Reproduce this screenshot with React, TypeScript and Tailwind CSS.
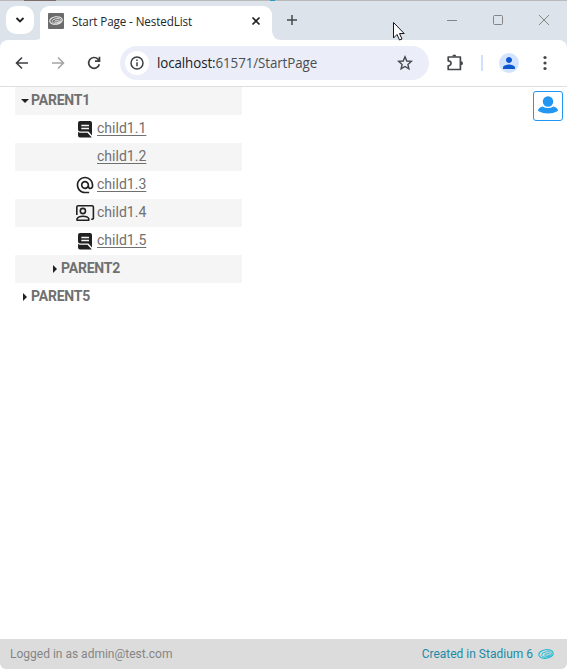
import type { ReactNode } from 'react';
import { MdAlternateEmail, MdPerson } from 'react-icons/md';

function StadiumLogo({ className }: { className: string }) {
  return (
    <svg viewBox="0 0 16 12" className={className} fill="none" stroke="currentColor">
      <g transform="rotate(-8 8 6)">
        <ellipse cx="8" cy="6" rx="7.2" ry="4.3" strokeWidth="1.2" />
        <ellipse cx="8.6" cy="6.5" rx="5" ry="2.6" strokeWidth=".9" />
        <ellipse cx="9.2" cy="7" rx="2.8" ry="1.1" strokeWidth=".9" />
      </g>
    </svg>
  );
}

function NoteIcon() {
  return (
    <svg viewBox="0 0 16 18" className="h-[18px] w-4">
      <path d="M3 1H13Q15 1 15 3V15.5L11.5 11.5H3Q1 11.5 1 9.5V3Q1 1 3 1Z" fill="#212121" />
      <path d="M1 11.5Q1.5 12.7 3 12.7H10.5L14.8 17.4H3Q1 17.4 1 15.2Z" fill="#212121" />
      <path d="M4.3 5.5H12M4.3 8.5H12" stroke="#f5f5f5" strokeWidth="1.3" />
    </svg>
  );
}

function PresenterIcon() {
  return (
    <svg viewBox="0 0 20 18" className="h-[18px] w-5" fill="none" stroke="#212121" strokeWidth="1.6">
      <path d="M1.8 11V3.2Q1.8 1.8 3.2 1.8H17Q18.4 1.8 18.4 3.2V14Q18.4 15.3 16.2 15.3" />
      <circle cx="7.9" cy="7" r="2.6" />
      <path d="M2 16.2V14.8C3 12.8 5.5 12.3 8 12.3S13 12.8 13.8 14.8V16.2Z" strokeLinejoin="round" />
    </svg>
  );
}

function Caret({ open }: { open?: boolean }) {
  return (
    <svg viewBox="0 0 8 8" className="mr-0.5 size-2 shrink-0" fill="#212121">
      {open ? <path d="M0 2H8L4 6Z" /> : <path d="M2 0L6 4L2 8Z" />}
    </svg>
  );
}

function Parent({ label, open, nested, shaded }: { label: string; open?: boolean; nested?: boolean; shaded?: boolean }) {
  return (
    <li className={`flex h-7 items-center ${nested ? 'pl-9' : 'pl-1.5'} ${shaded ? 'bg-[#f5f5f5]' : ''}`}>
      <Caret open={open} />
      <span className="pb-0.5 text-[14px] leading-5 font-bold tracking-[-0.2px]">{label}</span>
    </li>
  );
}

function Child({ label, icon, plain, shaded }: { label: string; icon?: ReactNode; plain?: boolean; shaded?: boolean }) {
  return (
    <li className={`flex h-7 items-center pl-[60px] ${shaded ? 'bg-[#f5f5f5]' : ''}`}>
      <span className="flex w-[22px] shrink-0 justify-center pr-0.5">{icon}</span>
      <span className={`pb-0.5 text-[14px] leading-5 tracking-[0.02px] ${plain ? '' : 'underline underline-offset-2'}`}>{label}</span>
    </li>
  );
}

function TabStrip() {
  return (
    <div className="relative flex h-10 bg-[#dce3eb] pt-[6px] pl-[6px]">
      <div className="absolute inset-x-0 top-0 flex h-px bg-[#b9b9b9]">
        <span className="ml-6 w-8 bg-[#806c66]" />
        <span className="ml-[214px] w-[5px] bg-[#289dbd]" />
      </div>
      <button className="flex h-7 w-7 items-center justify-center rounded-[10px] bg-white">
        <svg viewBox="0 0 10 10" className="size-2.5" fill="none" stroke="#202124" strokeWidth="1.8">
          <path d="M1.5 3L5 6.5L8.5 3" />
        </svg>
      </button>
      <svg viewBox="0 0 10 10" className="-mr-1 size-2.5 self-end" fill="white">
        <path d="M0 10Q10 10 10 0V10Z" />
      </svg>
      <div className="flex h-[34px] w-[232px] items-center rounded-t-[9px] bg-white pr-[11px] pb-[5px] pl-2">
        <span className="flex size-4 items-center justify-center rounded-[1px] bg-[#6b6b6b] text-[#eeeeee]">
          <StadiumLogo className="h-[11px] w-[14px]" />
        </span>
        <span className="ml-2 w-[170px] origin-left scale-x-[0.972] pt-0.5 font-['Open_Sans','Noto_Sans',sans-serif] text-[12px] leading-4 tracking-[-0.12px] whitespace-nowrap text-[#25272a]">Start Page - NestedList</span>
        <svg viewBox="0 0 10 10" className="ml-auto size-2.5" stroke="#202124" strokeWidth="1.7">
          <path d="M1.5 1.5L8.5 8.5M8.5 1.5L1.5 8.5" />
        </svg>
      </div>
      <svg viewBox="0 0 10 10" className="size-2.5 self-end" fill="white">
        <path d="M0 0Q0 10 10 10H0Z" />
      </svg>
      <svg viewBox="0 0 12 12" className="mt-2 ml-1 size-3" stroke="#45484b" strokeWidth="1.5">
        <path d="M6 1V11M1 6H11" />
      </svg>
      <div className="mt-[7px] mr-[17px] ml-auto flex h-[14px] items-center gap-[34px] text-[#858585]">
        <svg viewBox="0 0 12 12" className="size-3" stroke="currentColor"><path d="M1 6.5H11" /></svg>
        <svg viewBox="0 0 12 12" className="size-3" fill="none" stroke="currentColor"><rect x="1.5" y="1.5" width="9" height="9" rx="1" /></svg>
        <svg viewBox="0 0 12 12" className="size-3" stroke="currentColor"><path d="M1 1L11 11M11 1L1 11" /></svg>
      </div>
      <svg viewBox="0 0 14 20" className="absolute top-[21px] left-[392px] h-5 w-3.5" fill="white" stroke="#15151f" strokeLinejoin="miter">
        <path d="M1.5 1.5V17L5 13.5L7.5 19L10 18L7.5 12.5H12.2Z" />
      </svg>
    </div>
  );
}

function Toolbar() {
  return (
    <div className="bg-[#dce3eb]">
      <div className="flex h-[47px] items-center rounded-t-[8px] border-b border-[#dedede] bg-white pl-[15px]">
        <svg viewBox="0 0 14 14" className="size-3.5" fill="none" stroke="#3c3f42" strokeWidth="1.6"><path d="M13 7H2M7 1.5L1.5 7L7 12.5" /></svg>
        <svg viewBox="0 0 14 14" className="ml-[22px] size-3.5" fill="none" stroke="#a5a5a5" strokeWidth="1.6"><path d="M1 7H12M7 1.5L12.5 7L7 12.5" /></svg>
        <svg viewBox="0 0 14 14" className="ml-[22px] size-3.5" fill="none" stroke="#3c3f42" strokeWidth="1.7"><path d="M12.3 8.2A5.4 5.4 0 1 1 11 3.2L12.4 4.6M12.5 .8V5.2H8" /></svg>
        <div className="ml-[19px] flex h-[34px] w-[309px] items-center rounded-full bg-[#ebeef8] pr-4 pl-[5px]">
          <span className="flex size-6 items-center justify-center rounded-full bg-white">
            <svg viewBox="0 0 14 14" className="size-3.5" fill="none" stroke="#3c3f42" strokeWidth="1.5"><circle cx="7" cy="7" r="6" /><path d="M7 6.2V10.3M7 3.6V5.1" /></svg>
          </span>
          <span className="ml-2 flex w-[200px] origin-left scale-x-[0.954] font-['Open_Sans','Noto_Sans',sans-serif] text-[14px] leading-5 tracking-[-0.1px] text-[#4b4e52]"><span className="text-[#202124]">localhost:</span>61571/StartPage</span>
          <svg viewBox="0 0 16 16" className="ml-auto size-4" fill="none" stroke="#45484b" strokeWidth="1.4"><path d="M8 1.8L9.8 6L14.3 6.4L10.9 9.4L11.9 13.9L8 11.5L4.1 13.9L5.1 9.4L1.7 6.4L6.2 6Z" /></svg>
        </div>
        <svg viewBox="0 0 18 18" className="ml-[18px] size-[18px]" fill="#45484b">
          <path d="M1.2 3H13.4V15.5H1.2V11.8C5 11.8 5 6.8 1.2 6.8Z" fill="none" stroke="#45484b" strokeWidth="1.7" strokeLinejoin="round" />
          <path d="M5.3 2.5A2 2 0 0 1 9.3 2.5ZM14 7.2A2 2 0 0 1 14 11.2Z" />
        </svg>
        <span className="ml-[16px] h-4 w-0.5 bg-[#cfe1fb]" />
        <span className="ml-4 flex size-5 items-center justify-center rounded-full bg-[#d3e3fd]"><MdPerson className="size-[18px] text-[#0b57d0]" /></span>
        <svg viewBox="0 0 4 16" className="ml-6 h-4 w-1" fill="#45484b"><circle cx="2" cy="2.5" r="1.6" /><circle cx="2" cy="8" r="1.6" /><circle cx="2" cy="13.5" r="1.6" /></svg>
      </div>
    </div>
  );
}

export default function App() {
  return (
    <div className="flex h-[669px] w-[567px] flex-col overflow-hidden bg-white font-[Roboto,sans-serif] text-[#707070]">
      <TabStrip />
      <Toolbar />
      <main className="flex flex-1 items-start pl-[15px]">
        <ul className="w-[227px]">
          <Parent label="PARENT1" open shaded />
          <Child label="child1.1" icon={<NoteIcon />} />
          <Child label="child1.2" shaded />
          <Child label="child1.3" icon={<MdAlternateEmail className="size-5 shrink-0 text-[#212121]" />} />
          <Child label="child1.4" icon={<PresenterIcon />} plain shaded />
          <Child label="child1.5" icon={<NoteIcon />} />
          <Parent label="PARENT2" nested shaded />
          <Parent label="PARENT5" />
        </ul>
        <button className="mt-1 mr-1 ml-auto flex h-[30px] w-[30px] items-center justify-center rounded-[3px] border border-[#2196f3]">
          <svg viewBox="0 0 22 20" className="mb-0.5 h-5 w-[22px]" fill="#2196f3">
            <circle cx="11" cy="6.5" r="5.2" />
            <path d="M1 16Q1 12.5 5.5 11.4Q11 14.5 16.5 11.4Q21 12.5 21 16Q16 18.6 11 18.6T1 16Z" />
          </svg>
        </button>
      </main>
      <footer className="flex h-[30px] items-center justify-between rounded-b-[6px] bg-[#dcdcdc] pr-[13px] pl-2.5 text-[12px] leading-4">
        <span className="text-[#858585]">Logged in as admin@test.com</span>
        <span className="flex items-center gap-[5px] text-[#1b8aa5]">
          Created in Stadium 6
          <StadiumLogo className="h-3 w-4 text-[#20b9d3]" />
        </span>
      </footer>
    </div>
  );
}
